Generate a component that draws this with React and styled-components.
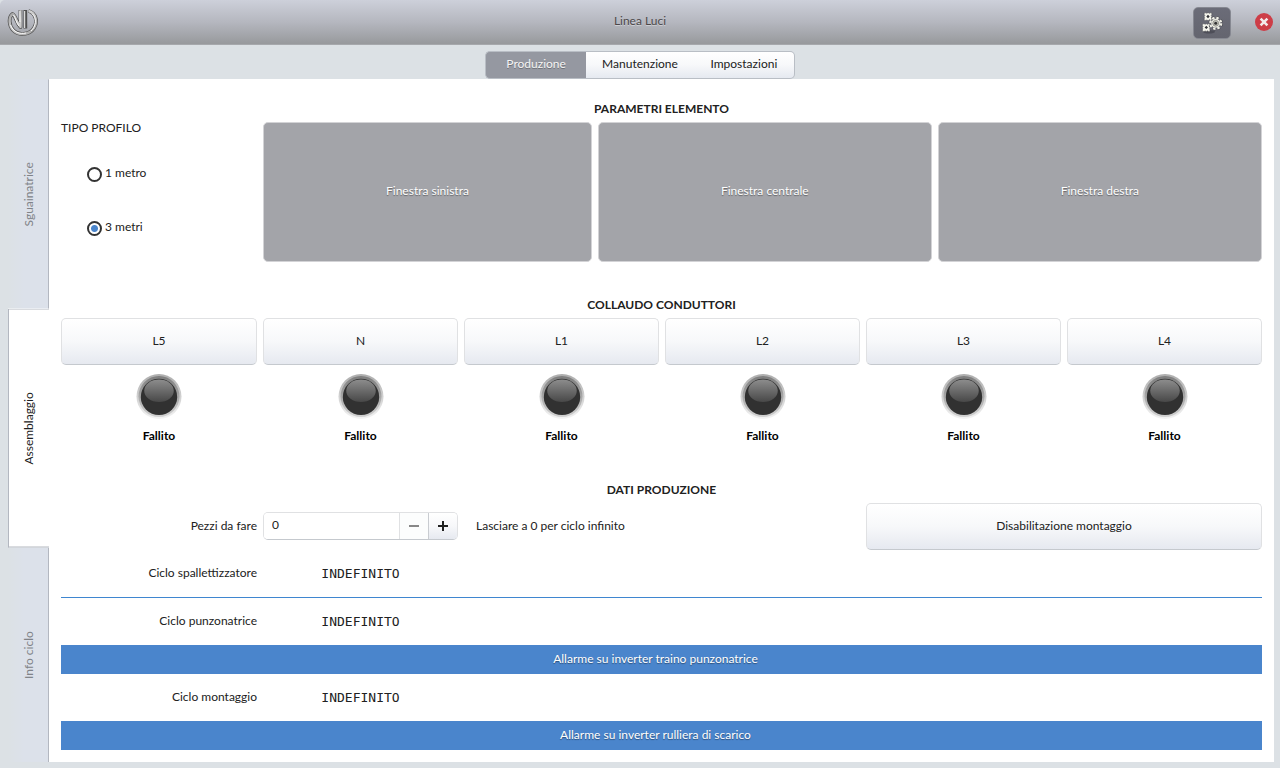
import React, { useState } from "react";
import styled, { createGlobalStyle } from "styled-components";

const pages = ["Produzione", "Manutenzione", "Impostazioni"];
const stations = ["Sguainatrice", "Assemblaggio", "Info ciclo"];
const windows = ["Finestra sinistra", "Finestra centrale", "Finestra destra"];
const conductors = ["L5", "N", "L1", "L2", "L3", "L4"];
const profiles = ["1 metro", "3 metri"];

const Logo = () => (
  <svg width="32" height="30" viewBox="0 0 32 30" fill="none" aria-hidden="true">
    <defs>
      <linearGradient id="chrome" x1="0" y1="0" x2="1" y2="1">
        <stop offset="0" stopColor="#9a9a9a" />
        <stop offset="0.45" stopColor="#d2d2d2" />
        <stop offset="1" stopColor="#a0a0a0" />
      </linearGradient>
    </defs>
    <g strokeLinejoin="round">
      <g stroke="#505050" strokeWidth="3.800">
        <path d="M21.500 4C29 6 31 15 27 21C22.500 28 12 29 6.500 23.500C1.500 18.500 1.500 10 5.500 7C8.500 8 9 15 13.500 20V3" />
        <path d="M18.300 3V21.500" />
      </g>
      <g stroke="url(#chrome)" strokeWidth="2.400">
        <path d="M21.500 4C29 6 31 15 27 21C22.500 28 12 29 6.500 23.500C1.500 18.500 1.500 10 5.500 7C8.500 8 9 15 13.500 20V3" />
        <path d="M18.300 3V21.500" />
      </g>
      <g stroke="#fafafa" strokeWidth="1">
        <path d="M3.500 18C6 25 13 27.500 19 26M24 24C29 20 30 11 25.500 7" />
        <path d="M6.500 8C8.500 10 9 16 12 19M12.900 4V15M17.700 4V21" />
      </g>
    </g>
  </svg>
);

const GearsIcon = () => (
  <svg width="22" height="22" viewBox="0 0 22 22" aria-hidden="true">
    <ellipse cx="8" cy="19.700" rx="6" ry="1.800" fill="#3d3e47" opacity="0.600" />
    <g fill="#f6f6ee" stroke="#44454b" strokeWidth="0.500">
      <path d="M3.200.8h2l.7.600.7-.6h1l.7.600.7-.6h1.800v2l-.6.700.6.700v1l-.6.700.6.700v1.800H9l-.7-.6-.7.600h-1l-.7-.6-.7.600h-2V6.600l.6-.7-.6-.7v-1l.6-.7-.6-.7z" />
      <path d="M1.400 11.800h2l.7.600.7-.6h1l.7.600.7-.6H9v2l-.6.700.6.700v1l-.6.700.6.700v1.800H7.200l-.7-.6-.7.600h-1l-.7-.6-.7.600h-2v-1.800l.6-.7-.6-.7v-1l.6-.7-.6-.7z" />
    </g>
    <path d="M7 2.800l1.700 1.700L7 6.200 5.300 4.500zM5.300 13.700L7 15.400l-1.700 1.700-1.700-1.700z" fill="#2f3036" />
    <g fill="none">
      <circle cx="14.700" cy="11.300" r="5.700" stroke="#44454b" strokeWidth="3" strokeDasharray="2.700 1.776" />
      <circle cx="14.700" cy="11.300" r="4.800" fill="#f0f0e8" stroke="#44454b" strokeWidth="0.600" />
      <circle cx="14.700" cy="11.300" r="5.500" stroke="#f0f0e8" strokeWidth="2.200" strokeDasharray="2.400 1.920" />
    </g>
    <circle cx="14.700" cy="11.300" r="2.900" fill="#c4c4bd" stroke="#85867f" strokeWidth="0.800" />
    <circle cx="14.700" cy="11.300" r="1.500" fill="#333" />
  </svg>
);

const CloseIcon = () => (
  <svg width="18" height="18" viewBox="0 0 18 18" aria-hidden="true">
    <circle cx="9" cy="9" r="9" fill="#cd3d47" />
    <path d="M5.600 5.600l6.800 6.800M12.400 5.600l-6.800 6.800" stroke="#f3e9ea" strokeWidth="2.600" />
  </svg>
);

const Led = () => (
  <svg width="46" height="46" viewBox="0 0 46 46" aria-hidden="true">
    <defs>
      <linearGradient id="ledRim" x1="0" y1="0" x2="0" y2="1">
        <stop offset="0" stopColor="#adadad" />
        <stop offset="1" stopColor="#f4f4f4" />
      </linearGradient>
      <linearGradient id="ledRing" x1="0" y1="0" x2="0" y2="1">
        <stop offset="0" stopColor="#7d7d7d" />
        <stop offset="1" stopColor="#d2d2d2" />
      </linearGradient>
      <linearGradient id="ledGlass" x1="0" y1="0" x2="0" y2="1">
        <stop offset="0" stopColor="#8d8d8d" />
        <stop offset="1" stopColor="#484848" />
      </linearGradient>
    </defs>
    <circle cx="23" cy="22.500" r="22.500" fill="url(#ledRim)" />
    <circle cx="23" cy="22.500" r="20.500" fill="url(#ledRing)" />
    <circle cx="23" cy="22.900" r="18.200" fill="#313131" />
    <ellipse cx="23" cy="16.700" rx="14.800" ry="11.300" fill="url(#ledGlass)" />
  </svg>
);

const App = () => {
  const [page, setPage] = useState("Produzione");
  const [station, setStation] = useState("Assemblaggio");
  const [profile, setProfile] = useState("3 metri");
  const [pieces, setPieces] = useState(0);

  return (
    <Container>
      <GlobalStyle />
      <Header>
        <Logo />
        <Title>Linea Luci</Title>
        <HeaderActions>
          <GearButton aria-label="Configurazione">
            <GearsIcon />
          </GearButton>
          <CloseButton aria-label="Chiudi">
            <CloseIcon />
          </CloseButton>
        </HeaderActions>
      </Header>
      <Switcher>
        {pages.map((name) => (
          <SwitcherButton
            key={name}
            $active={name === page}
            onClick={() => setPage(name)}
          >
            {name}
          </SwitcherButton>
        ))}
      </Switcher>
      <Notebook>
        <Sidebar>
          {stations.map((name) => (
            <SideTab
              key={name}
              $active={name === station}
              onClick={() => setStation(name)}
            >
              {name}
            </SideTab>
          ))}
        </Sidebar>
        <Panel>
          <Section>
            <SectionTitle>Parametri elemento</SectionTitle>
            <Params>
              <Profile>
                <Legend>TIPO PROFILO</Legend>
                {profiles.map((name) => (
                  <RadioLabel key={name}>
                    <Radio
                      type="radio"
                      name="profilo"
                      checked={name === profile}
                      onChange={() => setProfile(name)}
                    />
                    {name}
                  </RadioLabel>
                ))}
              </Profile>
              <Windows>
                {windows.map((name) => (
                  <WindowButton key={name}>{name}</WindowButton>
                ))}
              </Windows>
            </Params>
          </Section>
          <Section>
            <SectionTitle>Collaudo conduttori</SectionTitle>
            <Columns>
              {conductors.map((name) => (
                <Conductor key={name}>
                  <Button>{name}</Button>
                  <Led />
                  <Status>Fallito</Status>
                </Conductor>
              ))}
            </Columns>
          </Section>
          <Section>
            <SectionTitle>Dati produzione</SectionTitle>
            <Production>
              <Columns>
                <Label htmlFor="pezzi">Pezzi da fare</Label>
                <Spin>
                  <SpinInput
                    id="pezzi"
                    type="text"
                    inputMode="numeric"
                    value={pieces}
                    onChange={(e) => setPieces(Number(e.target.value) || 0)}
                  />
                  <SpinButton
                    aria-label="Diminuisci"
                    disabled={pieces === 0}
                    onClick={() => setPieces(pieces - 1)}
                  >
                    <svg width="10" height="10" viewBox="0 0 10 10">
                      <path d="M0 5h10" stroke="currentColor" strokeWidth="2" />
                    </svg>
                  </SpinButton>
                  <SpinButton
                    aria-label="Aumenta"
                    onClick={() => setPieces(pieces + 1)}
                  >
                    <svg width="10" height="10" viewBox="0 0 10 10">
                      <path d="M0 5h10M5 0v10" stroke="currentColor" strokeWidth="2" />
                    </svg>
                  </SpinButton>
                </Spin>
                <Hint>Lasciare a 0 per ciclo infinito</Hint>
                <WideButton>Disabilitazione montaggio</WideButton>
              </Columns>
              <CycleRow>
                <Label as="span">Ciclo spallettizzatore</Label>
                <Value>INDEFINITO</Value>
              </CycleRow>
              <Divider />
              <CycleRow>
                <Label as="span">Ciclo punzonatrice</Label>
                <Value>INDEFINITO</Value>
              </CycleRow>
              <Alarm>Allarme su inverter traino punzonatrice</Alarm>
              <CycleRow>
                <Label as="span">Ciclo montaggio</Label>
                <Value>INDEFINITO</Value>
              </CycleRow>
              <Alarm>Allarme su inverter rulliera di scarico</Alarm>
            </Production>
          </Section>
        </Panel>
      </Notebook>
    </Container>
  );
};

const GlobalStyle = createGlobalStyle`
  * {
    box-sizing: border-box;
  }

  body {
    margin: 0;
    background: #dce1e5;
  }

  body, button, input {
    font-family: Lato, "Liberation Sans", sans-serif;
    font-size: 12px;
    line-height: 18px;
    color: #212121;
  }

  button {
    padding: 0;
    border: none;
    background: none;
    cursor: pointer;
  }
`;

const Container = styled.div`
  min-height: 100vh;
  display: flex;
  flex-direction: column;
`;

const Header = styled.header`
  height: 45px;
  padding: 0 7px;
  display: grid;
  grid-template-columns: 1fr auto 1fr;
  align-items: center;
  border-bottom: 1px solid #a6a8ac;
  border-top-left-radius: 5px;
  background: linear-gradient(#cdd0da, #b5b7bf 50%, #97999c);
`;

const Title = styled.h1`
  margin: 0;
  padding-bottom: 2px;
  font-size: 12px;
  font-weight: 400;
  color: #4b4749;
  text-shadow: 0 1px rgba(255, 255, 255, 0.4);
`;

const HeaderActions = styled.div`
  display: flex;
  align-items: center;
  justify-content: flex-end;
  gap: 24px;
`;

const GearButton = styled.button`
  width: 38px;
  height: 32px;
  margin-top: 2px;
  display: flex;
  align-items: center;
  justify-content: center;
  border: 1px solid #868891;
  border-radius: 5px;
  background: linear-gradient(#6b6c78, #64656f);
`;

const CloseButton = styled.button`
  display: flex;
`;

const Switcher = styled.nav`
  margin-top: 6px;
  display: flex;
  justify-content: center;
`;

const SwitcherButton = styled.button`
  min-width: 101px;
  height: 28px;
  padding: 0 16px 2px;
  border: solid #b9bec5;
  border-width: 1px 0;
  background: ${(props) =>
    props.$active ? "#9598a1" : "linear-gradient(#fff, #f7f8fa 50%, #e5e9f0)"};
  color: ${(props) => (props.$active ? "#f5f5f5" : "#212121")};
  text-shadow: ${(props) =>
    props.$active ? "0 1px rgba(0, 0, 0, 0.3)" : "none"};

  &:first-child {
    border-left-width: 1px;
    border-radius: 5px 0 0 5px;
  }

  &:last-child {
    border-right-width: 1px;
    border-radius: 0 5px 5px 0;
  }
`;

const Notebook = styled.main`
  flex: 1;
  padding: 0 6px 6px 8px;
  display: flex;
`;

const Sidebar = styled.nav`
  width: 41px;
  display: flex;
  flex-direction: column;
`;

const SideTab = styled.button`
  flex: 1 1 auto;
  writing-mode: vertical-rl;
  transform: rotate(180deg);
  background: ${(props) =>
    props.$active ? "#fff" : "linear-gradient(to left, #dce1e5, #dce1ea 40%)"};
  box-shadow: ${(props) =>
    props.$active
      ? "inset 0 1px #b3b7c0, inset 0 -1px #b3b7c0, inset -1px 0 #b3b7c0"
      : "inset 1px 0 #b3b7c0"};
  color: ${(props) => (props.$active ? "#212121" : "#808388")};
`;

const Panel = styled.div`
  flex: 1;
  padding: 21px 12px 12px;
  display: flex;
  flex-direction: column;
  justify-content: space-between;
  gap: 33px;
  background: #fff;
`;

const Section = styled.section``;

const SectionTitle = styled.h2`
  margin: 0 0 4px;
  font-size: 12px;
  font-weight: 700;
  line-height: 18px;
  text-align: center;
  text-transform: uppercase;
`;

const Columns = styled.div`
  display: grid;
  grid-template-columns: 196px repeat(5, 1fr);
  align-items: center;
  gap: 6px;
`;

const Params = styled(Columns)`
  align-items: stretch;
`;

const Profile = styled.fieldset`
  min-width: 0;
  margin: 0;
  padding: 0;
  border: none;
`;

const Legend = styled.legend`
  padding: 0;
  margin-bottom: 12px;
  line-height: 12px;
`;

const RadioLabel = styled.label`
  height: 54px;
  padding-left: 26px;
  display: flex;
  align-items: center;
  gap: 3px;
`;

const Radio = styled.input`
  appearance: none;
  width: 15px;
  height: 15px;
  margin: 2px 0 0;
  border: 2px solid #333;
  border-radius: 50%;

  &:checked {
    background: radial-gradient(circle, #4a85cc 3px, #fff 4px);
  }
`;

const Windows = styled.div`
  grid-column: span 5;
  min-height: 140px;
  display: flex;
  gap: 6px;
`;

const WindowButton = styled.button`
  flex: 1 1 auto;
  padding-bottom: 3px;
  border: 1px solid #d3d3d6;
  border-radius: 5px;
  background: #a3a4a9;
  color: #fff;
  text-shadow: 0 1px 1px rgba(0, 0, 0, 0.4);
`;

const Conductor = styled.div`
  padding-bottom: 2px;
  display: flex;
  flex-direction: column;
  align-items: center;
`;

const Button = styled.button`
  width: 100%;
  height: 47px;
  margin-bottom: 9px;
  padding-bottom: 2px;
  border: 1px solid #e0e1e3;
  border-bottom-color: #c5c9ce;
  border-radius: 5px;
  background: linear-gradient(#fff, #f7f8fa 50%, #e6e9f0);
`;

const WideButton = styled(Button)`
  grid-column: span 2;
  margin: 0;
`;

const Status = styled.strong`
  margin-top: 7px;
  font-weight: 700;
  color: #000;
`;

const Production = styled.div`
  display: flex;
  flex-direction: column;
  gap: 6px;
`;

const Label = styled.label`
  padding-bottom: 2px;
  text-align: right;
`;

const Spin = styled.div`
  height: 28px;
  margin-bottom: 1px;
  display: flex;
  overflow: hidden;
  border: 1px solid #e0e1e3;
  border-bottom-color: #c5c9ce;
  border-radius: 5px;
`;

const SpinInput = styled.input`
  flex: 1;
  min-width: 0;
  padding: 0 8px 2px;
  border: none;
  outline: none;
  background: #fff;
`;

const SpinButton = styled.button`
  width: 29px;
  display: flex;
  align-items: center;
  justify-content: center;
  border-left: 1px solid #c9ccd1;
  background: linear-gradient(#fff, #f7f8fa 50%, #e6e9f0);

  &:disabled {
    border-color: #e0e1e3;
    background: #fcfdfd;
    color: #888;
  }
`;

const Hint = styled.span`
  grid-column: span 2;
  padding: 0 0 2px 12px;
`;

const CycleRow = styled(Columns)`
  height: 35px;
`;

const Value = styled.span`
  font-family: "DejaVu Sans Mono", monospace;
  font-size: 13px;
  text-align: center;
`;

const Divider = styled.hr`
  width: 100%;
  margin: 0;
  border: none;
  border-top: 1px solid #3f86d0;
`;

const Alarm = styled.div`
  height: 29px;
  padding-right: 12px;
  background: #4a85cc;
  color: #fff;
  line-height: 28px;
  text-align: center;
  text-shadow: 0 1px 1px rgba(0, 0, 0, 0.4);
`;

export default App;
